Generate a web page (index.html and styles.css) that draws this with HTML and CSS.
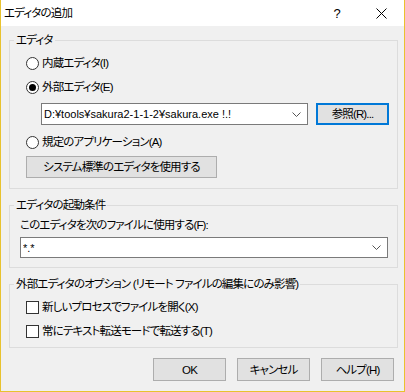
FILE: index.html
```html
<!DOCTYPE html>
<html lang="ja">
<head>
<meta charset="utf-8">
<title>エディタの追加</title>
<link rel="stylesheet" href="styles.css">
</head>
<body>
<div class="window">
  <div class="titlebar">
    <span class="title">エディタの追加</span>
    <span class="tb-help">?</span>
    <span class="tb-close"><svg width="11" height="11" viewBox="0 0 11 11"><path d="M0.5 0.5 L10.5 10.5 M10.5 0.5 L0.5 10.5" stroke="#000" stroke-width="1" fill="none"/></svg></span>
  </div>
  <div class="body">
    <fieldset class="group g1">
      <legend>エディタ</legend>
      <div class="inner">
        <label class="row"><span class="radio"></span>内蔵エディタ(I)</label>
        <label class="row"><span class="radio checked"></span>外部エディタ(E)</label>
        <div class="path-row">
          <div class="combo path"><span class="combo-text latin">D:¥tools¥sakura2-1-1-2¥sakura.exe !.!</span><svg class="chev" width="9" height="5" viewBox="0 0 9 5"><path d="M0.5 0.5 L4.5 4.5 L8.5 0.5" stroke="#555" fill="none"/></svg></div>
          <button class="btn focus">参照(R)...</button>
        </div>
        <label class="row r3"><span class="radio"></span>規定のアプリケーション(A)</label>
        <button class="btn sys">システム標準のエディタを使用する</button>
      </div>
    </fieldset>
    <fieldset class="group g2">
      <legend>エディタの起動条件</legend>
      <div class="inner">
        <div class="label">このエディタを次のファイルに使用する(F):</div>
        <div class="combo full"><span class="combo-text latin">*.*</span><svg class="chev" width="9" height="5" viewBox="0 0 9 5"><path d="M0.5 0.5 L4.5 4.5 L8.5 0.5" stroke="#555" fill="none"/></svg></div>
      </div>
    </fieldset>
    <fieldset class="group g3">
      <legend>外部エディタのオプション (リモート ファイルの編集にのみ影響)</legend>
      <div class="inner">
        <label class="row"><span class="check"></span>新しいプロセスでファイルを開く(X)</label>
        <label class="row"><span class="check"></span>常にテキスト転送モードで転送する(T)</label>
      </div>
    </fieldset>
  </div>
  <div class="footer">
    <button class="btn fbtn">OK</button>
    <button class="btn fbtn">キャンセル</button>
    <button class="btn fbtn">ヘルプ(H)</button>
  </div>
</div>
</body>
</html>
```
FILE: styles.css
```css
* { box-sizing: border-box; }
html, body { margin: 0; padding: 0; }
body {
  font-family: "Liberation Sans", "Noto Sans CJK JP", sans-serif;
  font-size: 11.5px;
  letter-spacing: -0.85px;
  font-feature-settings: "palt";
  color: #000;
  background: #fff;
}
.window {
  width: 405px;
  height: 392px;
  border: 1px solid #e8c22e;
  border-top: none;
  background: #f0f0f0;
  display: flex;
  flex-direction: column;
}
.titlebar {
  height: 26px;
  background: #fff;
  display: flex;
  align-items: center;
  padding-left: 3px;
  flex: none;
}
.title { flex: 1; line-height: 16px; margin-top: -1px; }
.tb-help { width: 12px; text-align: center; margin-right: 33px; font-size: 13px; letter-spacing: 0; }
.tb-close { width: 11px; height: 11px; margin-right: 17px; display: flex; }
.body {
  padding: 6px 6px 0 8px;
  display: flex;
  flex-direction: column;
}
.group {
  margin: 0;
  padding: 0;
  border: 1px solid #dcdcdc;
  min-width: 0;
}
.group legend {
  margin-left: 4px;
  padding: 0 2px;
  line-height: 16px;
}
.g2 { margin-top: 8px; }
.g3 { margin-top: 8px; }
.inner { display: flex; flex-direction: column; align-items: flex-start; }
.g1 .inner { padding: 3px 8px 10px 16px; }
.g2 .inner { padding: 4px 9px 9px 10px; align-items: stretch; }
.g3 .inner { padding: 3px 8px 4px 16px; }
.row {
  height: 24px;
  display: flex;
  align-items: center;
  gap: 3px;
  line-height: 16px;
}
.radio {
  width: 13px;
  height: 13px;
  border: 1px solid #333;
  border-radius: 50%;
  background: #fff;
  display: flex;
  align-items: center;
  justify-content: center;
  flex: none;
}
.radio.checked::after {
  content: "";
  width: 7px;
  height: 7px;
  border-radius: 50%;
  background: #000;
}
.check {
  width: 13px;
  height: 13px;
  border: 1px solid #333;
  background: #fff;
  flex: none;
}
.path-row {
  display: flex;
  gap: 8px;
  margin: 4px 0 5px 15px;
}
.combo {
  height: 22px;
  border: 1px solid #7a7a7a;
  background: #fff;
  display: flex;
  align-items: center;
  padding: 0 6px 0 2px;
}
.combo.path { width: 267px; }
.combo.full { height: 21px; }
.combo-text { flex: 1; line-height: 16px; white-space: nowrap; overflow: hidden; }
.latin { font-size: 11px; letter-spacing: 0; }
.chev { flex: none; }
.btn {
  font: inherit;
  letter-spacing: inherit;
  font-feature-settings: inherit;
  color: #000;
  height: 22px;
  background: #e1e1e1;
  border: 1px solid #adadad;
  padding: 0;
  line-height: 16px;
}
.btn.focus { width: 73px; border: 2px solid #0078d7; }
.btn.sys { width: 191px; margin-top: 2px; }
.label { line-height: 16px; margin-bottom: 4px; }
.footer {
  margin-top: auto;
  display: flex;
  justify-content: flex-end;
  gap: 11px;
  padding: 0 10px 10px 0;
}
.fbtn { width: 73px; height: 23px; }
```
